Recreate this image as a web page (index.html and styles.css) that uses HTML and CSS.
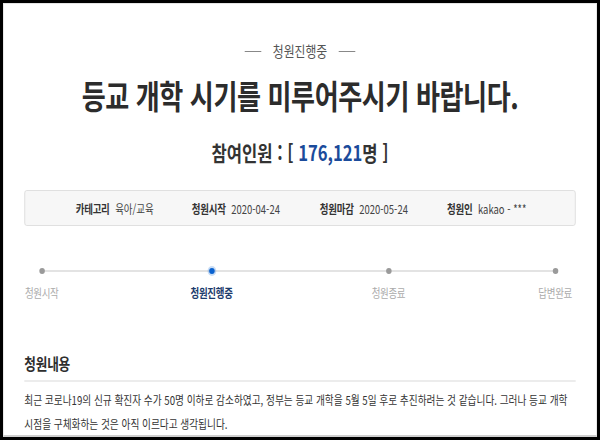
FILE: index.html
```html
<!DOCTYPE html>
<html lang="ko">
<head>
<meta charset="utf-8">
<link rel="stylesheet" href="styles.css">
</head>
<body>
<div class="frame">
  <div class="page">
    <div class="status"><span class="dash"></span><span>청원진행중</span><span class="dash"></span></div>
    <h1 class="title">등교 개학 시기를 미루어주시기 바랍니다.</h1>
    <div class="count">참여인원 : [ <span class="num">176,121</span>명 ]</div>
    <div class="info">
      <div class="item"><b>카테고리</b><span>육아/교육</span></div>
      <div class="item"><b>청원시작</b><span>2020-04-24</span></div>
      <div class="item"><b>청원마감</b><span>2020-05-24</span></div>
      <div class="item"><b>청원인</b><span>kakao - ***</span></div>
    </div>
    <div class="progress">
      <div class="track"></div>
      <div class="steps">
        <div class="step s1"><i class="dot"></i><span>청원시작</span></div>
        <div class="step s2 active"><i class="dot"></i><span>청원진행중</span></div>
        <div class="step s3"><i class="dot"></i><span>청원종료</span></div>
        <div class="step s4"><i class="dot"></i><span>답변완료</span></div>
      </div>
    </div>
    <h2 class="sec">청원내용</h2>
    <p class="body">최근 코로나19의 신규 확진자 수가 50명 이하로 감소하였고, 정부는 등교 개학을 5월 5일 후로 추진하려는 것 같습니다. 그러나 등교 개학 시점을 구체화하는 것은 아직 이르다고 생각됩니다.</p>
  </div>
</div>
</body>
</html>
```
FILE: styles.css
```css
html, body { margin: 0; padding: 0; background: #000; overflow: hidden; }
body { font-family: "Noto Sans CJK KR", "Noto Sans", sans-serif; color: #333; }

.frame {
  width: 600px; height: 440px; box-sizing: border-box;
  padding: 3px 3px 0 3px; overflow: hidden;
}
/* the reference is rendered horizontally condensed: lay out at 752px, then scale to 594px */
.page {
  width: 752px; background: #fff; height: 434px; box-sizing: border-box;
  border: 1px solid #e4e4e4; border-bottom: 2px solid #cfcfcf;
  padding: 0 26px; overflow: hidden;
  transform: scaleX(0.7899); transform-origin: 0 0;
}

.status {
  display: flex; justify-content: center; align-items: center; gap: 14px;
  margin-top: 37px; height: 20px; font-size: 15px; line-height: 20px; color: #555;
}
.dash { width: 21px; height: 1px; background: #888; }

.title {
  margin: 14px 0 0; text-align: center; font-size: 33px; font-weight: 700;
  letter-spacing: -0.5px; line-height: 40px; color: #2c2c2c;
}

.count {
  margin-top: 22px; text-align: center; font-size: 21px; font-weight: 700;
  line-height: 30px; color: #333;
}
.num { color: #1b4b9b; }

.info {
  margin-top: 23px; height: 36px; box-sizing: border-box;
  background: #f7f7f7; border: 1px solid #dcdcdc; border-radius: 3px;
  display: flex; align-items: center; padding-left: 64px; font-size: 12px;
}
.item { display: flex; gap: 7px; white-space: nowrap; }
.item:nth-child(1) { width: 147px; }
.item:nth-child(2) { width: 162px; }
.item:nth-child(3) { width: 161px; }
.item b { font-weight: 700; color: #333; letter-spacing: -0.3px; }
.item span { color: #444; }

.progress { position: relative; margin-top: 42px; }
.track { position: absolute; left: 22px; right: 25px; top: 2px; height: 2px; background: #e3e3e3; }
.steps { position: relative; display: flex; }
.step { width: 0; display: flex; flex-direction: column; align-items: center; }
.s1 { margin-left: 22px; }
.s2 { margin-left: 215px; }
.s3 { margin-left: 224px; }
.s4 { margin-left: 211px; }
.dot { display: block; flex: none; width: 7px; height: 6px; border-radius: 50%; background: #9a9a9a; }
.step span { margin-top: 11px; white-space: nowrap; font-size: 12px; line-height: 16px; color: #ababab; letter-spacing: -0.4px; }
.active .dot { background: #0a62d0; box-shadow: 0 0 0 2px rgba(10, 98, 208, 0.22); }
.active span { color: #1c3b6c; font-weight: 700; }

.sec {
  margin: 50px 0 0; font-size: 16px; font-weight: 700; line-height: 24px;
  letter-spacing: -0.25px; padding-bottom: 5px; border-bottom: 2px solid #ececec; color: #2e2e2e;
}
.body { margin: 6px 0 0; font-size: 12.25px; line-height: 24px; letter-spacing: 0; color: #333; }
```
